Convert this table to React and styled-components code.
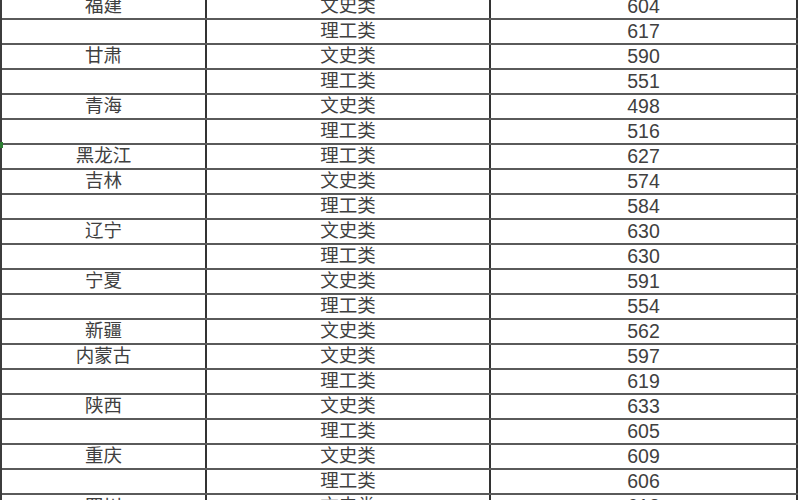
import React from 'react';
import styled, { createGlobalStyle } from 'styled-components';

const GlobalStyle = createGlobalStyle`
    html, body {
        margin: 0;
        padding: 0;
        background: #fff;
        overflow: hidden;
    }
    body {
        width: 800px;
        height: 500px;
        font-family: "Liberation Sans", "Noto Sans CJK SC", sans-serif;
    }
`;

const Page = styled.div`
    position: relative;
    width: 800px;
    height: 500px;
    overflow: hidden;
`;

const Sheet = styled.div`
    width: 798px;
    margin-top: -5px;
    border-left: 2px solid #3c3c3c;
    box-sizing: border-box;
`;

const Row = styled.div`
    display: grid;
    grid-template-columns: 205px 284px 307px;
    height: 25px;
    box-sizing: border-box;
    border-bottom: 2px solid #5a5a5a;
`;

const Cell = styled.div`
    display: flex;
    align-items: center;
    justify-content: center;
    border-right: 2px solid #333;
    font-size: ${props => (props.$num ? '19.5px' : '18.5px')};
    line-height: 1;
    color: #404040;
    padding-top: ${props => (props.$num ? '1px' : '0')};
    white-space: nowrap;
`;

const Marker = styled.div`
    position: absolute;
    left: 0;
    top: 142px;
    width: 3px;
    height: 6px;
    background: #2e7d32;
`;

const rows = [
    ['福建', '文史类', '604'],
    ['', '理工类', '617'],
    ['甘肃', '文史类', '590'],
    ['', '理工类', '551'],
    ['青海', '文史类', '498'],
    ['', '理工类', '516'],
    ['黑龙江', '理工类', '627'],
    ['吉林', '文史类', '574'],
    ['', '理工类', '584'],
    ['辽宁', '文史类', '630'],
    ['', '理工类', '630'],
    ['宁夏', '文史类', '591'],
    ['', '理工类', '554'],
    ['新疆', '文史类', '562'],
    ['内蒙古', '文史类', '597'],
    ['', '理工类', '619'],
    ['陕西', '文史类', '633'],
    ['', '理工类', '605'],
    ['重庆', '文史类', '609'],
    ['', '理工类', '606'],
    ['四川', '文史类', '612'],
];

export default function App() {
    return (
        <Page>
            <GlobalStyle />
            <Sheet>
                {rows.map((r, i) => (
                    <Row key={i}>
                        <Cell>{r[0]}</Cell>
                        <Cell>{r[1]}</Cell>
                        <Cell $num>{r[2]}</Cell>
                    </Row>
                ))}
            </Sheet>
            <Marker />
        </Page>
    );
}
